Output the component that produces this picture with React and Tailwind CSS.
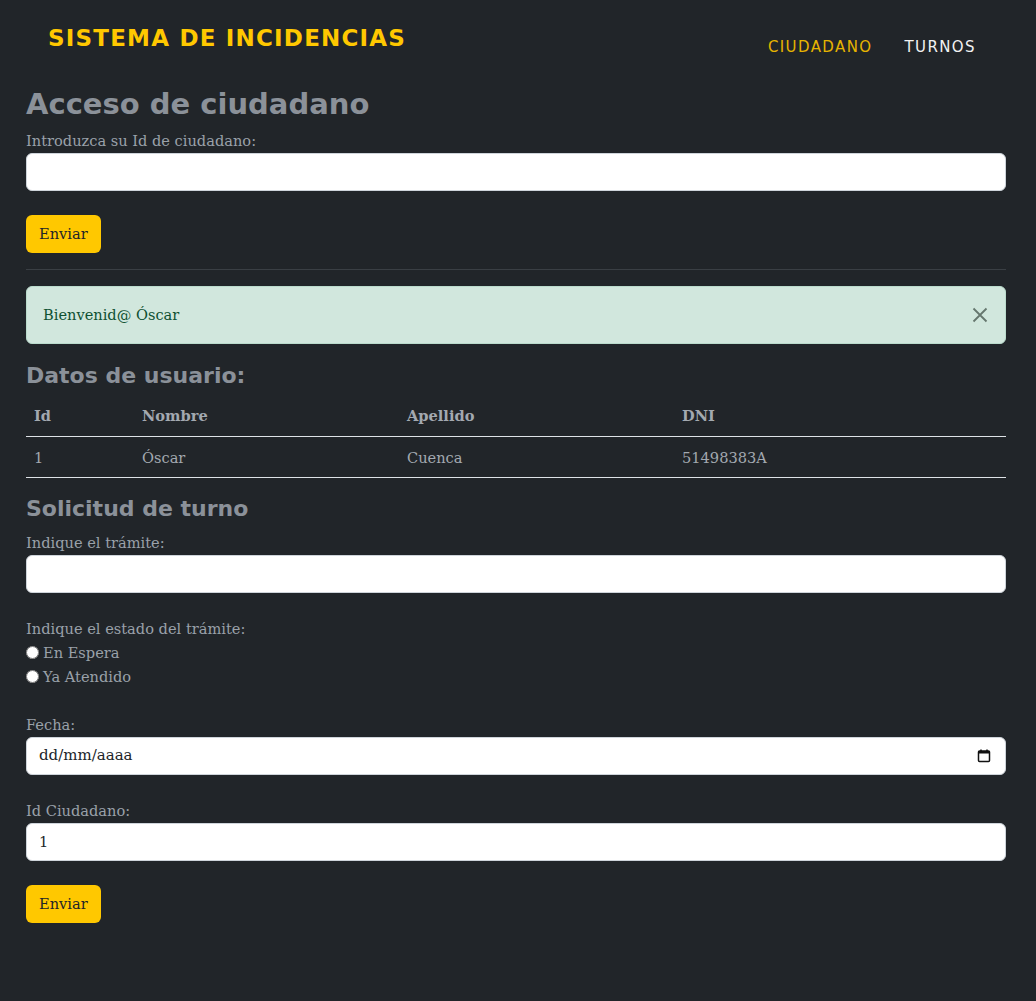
import React from "react";

const heading = { fontFamily: '"DejaVu Sans", "Open Sans", sans-serif' };
const slab = { fontFamily: '"DejaVu Serif", "Liberation Serif", serif' };

const Field = ({ label, children, className = "" }) => (
  <div className={className}>
    <label className="block text-[14.6px] leading-[24px] text-[#9aa1a9]">{label}</label>
    {children}
  </div>
);

const TextBox = ({ children }) => (
  <div className="h-[38px] w-full rounded-[6px] border border-[#ced4da] bg-white px-3 flex items-center text-[14.6px] text-[#212529]">
    {children}
  </div>
);

const Button = () => (
  <button className="h-[38px] rounded-[6px] bg-[#ffc800] px-[13px] text-[14.6px] text-[#212529]">
    Enviar
  </button>
);

export default function App() {
  const users = [{ id: 1, nombre: "Óscar", apellido: "Cuenca", dni: "51498383A" }];

  return (
    <div className="min-h-[1001px] bg-[#212529]" style={slab}>
      {/* Navbar */}
      <nav className="flex items-start justify-between pl-12 pr-[60px]" style={heading}>
        <div className="pt-[21px] text-[23px] font-bold leading-[34px] tracking-[1.2px] text-[#ffc800]">
          SISTEMA DE INCIDENCIAS
        </div>
        <div className="flex gap-8 pt-[36px] text-[15px] tracking-[1.4px]">
          <a className="text-[#e6b400]">CIUDADANO</a>
          <a className="text-[#f2f2f2]">TURNOS</a>
        </div>
      </nav>

      <main className="pl-[26px] pr-[30px] pt-[30px]">
        <h2 className="text-[29px] font-bold leading-[30px] text-[#8b9199]" style={heading}>
          Acceso de ciudadano
        </h2>
        <Field label="Introduzca su Id de ciudadano:" className="mt-[10px]">
          <TextBox />
        </Field>
        <div className="mt-[24px]">
          <Button />
        </div>

        <hr className="mt-[16px] border-t border-[#3a3f44]" />

        {/* Alert */}
        <div className="mt-[16px] flex h-[58px] items-center justify-between rounded-[6px] border border-[#badbcc] bg-[#d1e7dd] pl-4 pr-[17px] text-[14.6px] text-[#0f5132]">
          <span>Bienvenid@ Óscar</span>
          <svg width="16" height="16" viewBox="0 0 16 16" className="opacity-60">
            <path d="M1.5 1.5 14.5 14.5M14.5 1.5 1.5 14.5" stroke="#1f2d25" strokeWidth="1.8" />
          </svg>
        </div>

        <h3 className="mt-[17px] text-[22px] font-bold leading-[30px] text-[#8b9199]" style={heading}>
          Datos de usuario:
        </h3>
        <table className="mt-[5px] w-full text-left text-[14.6px] leading-[24px] text-[#a3a9b0]">
          <thead>
            <tr className="border-b border-[#dee2e6]">
              <th className="w-[108px] px-2 py-[8px] font-bold">Id</th>
              <th className="w-[265px] px-2 py-[8px] font-bold">Nombre</th>
              <th className="w-[275px] px-2 py-[8px] font-bold">Apellido</th>
              <th className="px-2 py-[8px] font-bold">DNI</th>
            </tr>
          </thead>
          <tbody>
            {users.map((u) => (
              <tr key={u.id} className="border-b border-[#dee2e6]">
                <td className="px-2 pt-[9px] pb-[7px]">{u.id}</td>
                <td className="px-2 pt-[9px] pb-[7px]">{u.nombre}</td>
                <td className="px-2 pt-[9px] pb-[7px]">{u.apellido}</td>
                <td className="px-2 pt-[9px] pb-[7px]">{u.dni}</td>
              </tr>
            ))}
          </tbody>
        </table>

        <h3 className="mt-[16px] text-[22px] font-bold leading-[30px] text-[#8b9199]" style={heading}>
          Solicitud de turno
        </h3>
        <Field label="Indique el trámite:" className="mt-[7px]">
          <TextBox />
        </Field>

        <div className="mt-[24px] text-[14.6px] leading-[24px] text-[#9aa1a9]">
          <div>Indique el estado del trámite:</div>
          <label className="flex items-center gap-[4px]">
            <input type="radio" name="estado" className="m-0 h-[13px] w-[13px]" />
            En Espera
          </label>
          <label className="flex items-center gap-[4px]">
            <input type="radio" name="estado" className="m-0 h-[13px] w-[13px]" />
            Ya Atendido
          </label>
        </div>

        <Field label="Fecha:" className="mt-[24px]">
          <div className="flex h-[38px] w-full items-center justify-between rounded-[6px] border border-[#ced4da] bg-white px-3 text-[15px] text-[#212529]">
            <span>dd/mm/aaaa</span>
            <svg width="14" height="14" viewBox="0 0 14 14" className="mr-[2px]">
              <rect x="1.5" y="2" width="11" height="10.5" rx="1" fill="none" stroke="#111" strokeWidth="1.5" />
              <rect x="1.5" y="2" width="11" height="2.5" fill="#111" />
              <path d="M4 0.5V2.5M10 0.5V2.5" stroke="#111" strokeWidth="1.5" />
            </svg>
          </div>
        </Field>

        <Field label="Id Ciudadano:" className="mt-[24px]">
          <TextBox>1</TextBox>
        </Field>
        <div className="mt-[24px]">
          <Button />
        </div>
      </main>
    </div>
  );
}
